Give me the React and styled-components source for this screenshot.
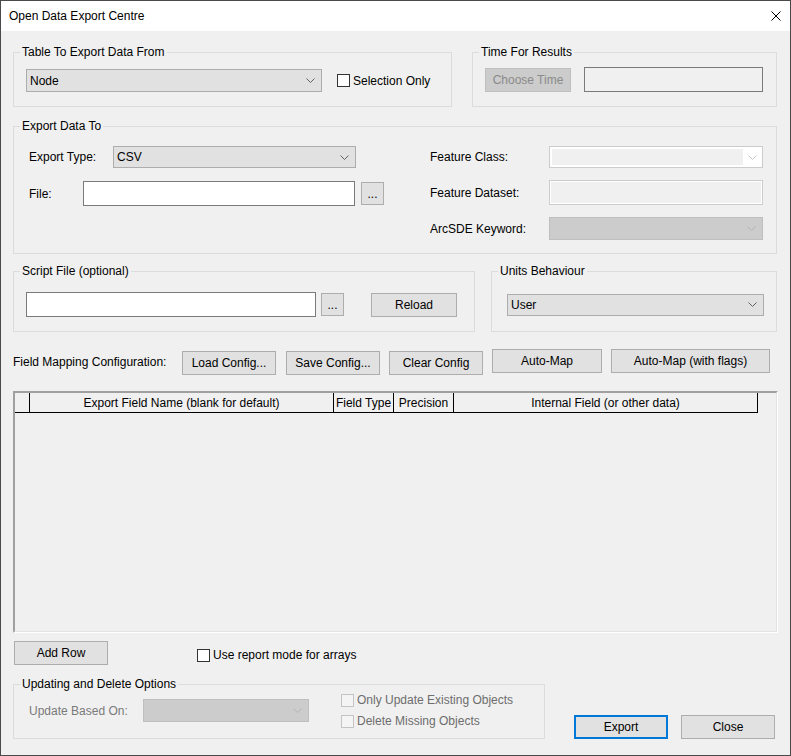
import React from "react";
import styled, {createGlobalStyle} from "styled-components";

const GlobalStyle = createGlobalStyle`
  html, body {
    margin: 0;
    padding: 0;
    background: #ffffff;
  }
  body {
    font-family: "Liberation Sans", Arial, sans-serif;
    font-size: 12px;
    color: #000;
  }
  * {
    box-sizing: border-box;
  }
`;

function Chevron({color = "#606060"}) {
    return (
        <svg width="9" height="5" viewBox="0 0 9 5">
            <path d="M0.5 0.5 L4.5 4.5 L8.5 0.5" fill="none" stroke={color} strokeWidth="1"/>
        </svg>
    );
}

function App() {
    return (
        <>
            <GlobalStyle/>
            <Window>
                <TitleBar>
                    <span>Open Data Export Centre</span>
                    <CloseBox>
                        <svg width="10" height="10" viewBox="0 0 10 10">
                            <path d="M0.5 0.5 L9.5 9.5 M9.5 0.5 L0.5 9.5" stroke="#000" strokeWidth="1"/>
                        </svg>
                    </CloseBox>
                </TitleBar>

                <Body>
                    {/* table + time */}
                    <Row $gap={20}>
                        <Group $w={439}>
                            <Legend>Table To Export Data From</Legend>
                            <GroupBody $pad="10px 0 14px 12px">
                                <Combo $w={296} $h={23}>
                                    <span>Node</span>
                                    <Chevron/>
                                </Combo>
                                <CheckLabel $ml={15}>
                                    <Check/>
                                    Selection Only
                                </CheckLabel>
                            </GroupBody>
                        </Group>
                        <Group $w={305}>
                            <Legend>Time For Results</Legend>
                            <GroupBody $pad="8px 0 14px 12px">
                                <Button disabled $w={86} $h={24}>Choose Time</Button>
                                <TextBox $w={179} $h={25} $ml={13} $readOnly/>
                            </GroupBody>
                        </Group>
                    </Row>

                    {/* export data to */}
                    <Row $mt={12}>
                        <Group $w={764}>
                            <Legend>Export Data To</Legend>
                            <GroupBody $pad="13px 0 13px 15px" $align="flex-start">
                                <Column $w={401}>
                                    <FieldRow $h={22}>
                                        <Label $w={84}>Export Type:</Label>
                                        <Combo $w={243} $h={22}>
                                            <span>CSV</span>
                                            <Chevron/>
                                        </Combo>
                                    </FieldRow>
                                    <FieldRow $h={25} $mt={13}>
                                        <Label $w={54}>File:</Label>
                                        <TextBox $w={272} $h={25}/>
                                        <Button $w={23} $h={23} $ml={6}>...</Button>
                                    </FieldRow>
                                </Column>
                                <Column>
                                    <FieldRow $h={22}>
                                        <Label $w={119}>Feature Class:</Label>
                                        <EditCombo $w={214} $h={22}>
                                            <EditArea/>
                                            <ChevronBox>
                                                <Chevron color="#c8c8c8"/>
                                            </ChevronBox>
                                        </EditCombo>
                                    </FieldRow>
                                    <FieldRow $h={25} $mt={12}>
                                        <Label $w={119}>Feature Dataset:</Label>
                                        <TextBox $w={214} $h={25} $disabled/>
                                    </FieldRow>
                                    <FieldRow $h={23} $mt={12}>
                                        <Label $w={119}>ArcSDE Keyword:</Label>
                                        <Combo $w={214} $h={23} $disabled>
                                            <span/>
                                            <Chevron color="#b4b4b4"/>
                                        </Combo>
                                    </FieldRow>
                                </Column>
                            </GroupBody>
                        </Group>
                    </Row>

                    {/* script file + units */}
                    <Row $mt={10} $gap={16}>
                        <Group $w={462}>
                            <Legend>Script File (optional)</Legend>
                            <GroupBody $pad="14px 0 14px 12px">
                                <TextBox $w={290} $h={25}/>
                                <Button $w={23} $h={23} $ml={5}>...</Button>
                                <Button $w={86} $h={24} $ml={27}>Reload</Button>
                            </GroupBody>
                        </Group>
                        <Group $w={286}>
                            <Legend>Units Behaviour</Legend>
                            <GroupBody $pad="14px 0 14px 15px">
                                <FieldRow $h={25}>
                                    <Combo $w={257} $h={22}>
                                        <span>User</span>
                                        <Chevron/>
                                    </Combo>
                                </FieldRow>
                            </GroupBody>
                        </Group>
                    </Row>

                    {/* field mapping toolbar */}
                    <Toolbar>
                        <Label $w={169}>Field Mapping Configuration:</Label>
                        <Button $w={94} $h={24} $self="flex-end">Load Config...</Button>
                        <Button $w={94} $h={24} $ml={10} $self="flex-end">Save Config...</Button>
                        <Button $w={94} $h={24} $ml={9} $self="flex-end">Clear Config</Button>
                        <Button $w={110} $h={24} $ml={9} $self="flex-start">Auto-Map</Button>
                        <Button $w={159} $h={24} $ml={9} $self="flex-start">Auto-Map (with flags)</Button>
                    </Toolbar>

                    {/* grid */}
                    <Grid>
                        <GridInner>
                            <HeaderRow>
                                <HeaderCell/>
                                <HeaderCell>Export Field Name (blank for default)</HeaderCell>
                                <HeaderCell>Field Type</HeaderCell>
                                <HeaderCell>Precision</HeaderCell>
                                <HeaderCell>Internal Field (or other data)</HeaderCell>
                            </HeaderRow>
                        </GridInner>
                    </Grid>

                    <Row $mt={8} $align="flex-start">
                        <Button $w={94} $h={24} $ml={1}>Add Row</Button>
                        <CheckLabel $ml={89} $mt={7}>
                            <Check/>
                            Use report mode for arrays
                        </CheckLabel>
                    </Row>

                    <Row $mt={12} $align="flex-end">
                        <Group $w={532}>
                            <Legend>Updating and Delete Options</Legend>
                            <GroupBody $pad="2px 0 10px 15px">
                                <Label $w={114} $disabled>Update Based On:</Label>
                                <Combo $w={166} $h={23} $disabled>
                                    <span/>
                                    <Chevron color="#b4b4b4"/>
                                </Combo>
                                <CheckColumn>
                                    <CheckLabel $disabled>
                                        <Check $disabled/>
                                        Only Update Existing Objects
                                    </CheckLabel>
                                    <CheckLabel $disabled>
                                        <Check $disabled/>
                                        Delete Missing Objects
                                    </CheckLabel>
                                </CheckColumn>
                            </GroupBody>
                        </Group>
                        <Button $w={94} $h={24} $ml={29} $default>Export</Button>
                        <Button $w={94} $h={24} $ml={13}>Close</Button>
                    </Row>
                </Body>
            </Window>
        </>
    );
}

const Window = styled.div`
  width: 791px;
  height: 756px;
  border: 1px solid #4a4a4a;
  background: #f0f0f0;
  display: flex;
  flex-direction: column;
  overflow: hidden;
`;

const TitleBar = styled.div`
  height: 30px;
  flex-shrink: 0;
  background: #ffffff;
  display: flex;
  align-items: center;
  justify-content: space-between;
  padding-left: 8px;
`;

const CloseBox = styled.div`
  width: 28px;
  height: 30px;
  display: flex;
  align-items: center;
  justify-content: center;
`;

const Body = styled.div`
  display: flex;
  flex-direction: column;
  padding: 14px 13px 0 12px;
`;

const Row = styled.div`
  display: flex;
  align-items: ${p => p.$align || "stretch"};
  gap: ${p => p.$gap || 0}px;
  margin-top: ${p => p.$mt || 0}px;
`;

const Group = styled.fieldset`
  margin: 0;
  padding: 0;
  min-width: 0;
  width: ${p => p.$w}px;
  border: 1px solid #dcdcdc;
`;

const Legend = styled.legend`
  margin-left: 6px;
  padding: 0 2px;
  font-size: 12px;
  line-height: 14px;
`;

const GroupBody = styled.div`
  display: flex;
  align-items: ${p => p.$align || "center"};
  padding: ${p => p.$pad};
`;

const Column = styled.div`
  display: flex;
  flex-direction: column;
  width: ${p => (p.$w ? `${p.$w}px` : "auto")};
`;

const FieldRow = styled.div`
  display: flex;
  align-items: center;
  height: ${p => p.$h}px;
  margin-top: ${p => p.$mt || 0}px;
`;

const Label = styled.span`
  width: ${p => p.$w}px;
  flex-shrink: 0;
  white-space: nowrap;
  color: ${p => (p.$disabled ? "#7a7a7a" : "#000")};
`;

const Combo = styled.div`
  width: ${p => p.$w}px;
  height: ${p => p.$h}px;
  flex-shrink: 0;
  display: flex;
  align-items: center;
  justify-content: space-between;
  padding: 0 6px 0 3px;
  background: ${p => (p.$disabled ? "#cccccc" : "#e1e1e1")};
  border: 1px solid ${p => (p.$disabled ? "#bfbfbf" : "#adadad")};
`;

const EditCombo = styled.div`
  width: ${p => p.$w}px;
  height: ${p => p.$h}px;
  display: flex;
  align-items: stretch;
  padding: 1px 0 1px 1px;
  background: #ffffff;
  border: 1px solid #cccccc;
`;

const EditArea = styled.div`
  flex: 1;
  background: #f0f0f0;
  margin: 1px 0 1px 1px;
`;

const ChevronBox = styled.div`
  width: 19px;
  display: flex;
  align-items: center;
  justify-content: center;
`;

const TextBox = styled.div`
  width: ${p => p.$w}px;
  height: ${p => p.$h}px;
  flex-shrink: 0;
  margin-left: ${p => p.$ml || 0}px;
  background: ${p => (p.$readOnly || p.$disabled ? "#f0f0f0" : "#ffffff")};
  border: 1px solid ${p => (p.$disabled ? "#cccccc" : "#7a7a7a")};
  box-shadow: ${p => (p.$disabled ? "inset 1px 1px 0 #ffffff, inset -1px -1px 0 #ffffff" : "none")};
`;

const Button = styled.button`
  width: ${p => p.$w}px;
  height: ${p => p.$h}px;
  flex-shrink: 0;
  margin: 0 0 0 ${p => p.$ml || 0}px;
  padding: 0;
  align-self: ${p => p.$self || "auto"};
  font-family: inherit;
  font-size: 12px;
  color: #000;
  background: #e1e1e1;
  border: ${p => (p.$default ? "2px solid #0078d7" : "1px solid #adadad")};

  &:disabled {
    background: #cccccc;
    border-color: #bfbfbf;
    color: #8a8a8a;
  }
`;

const CheckLabel = styled.label`
  display: flex;
  align-items: center;
  gap: 3px;
  line-height: 14px;
  white-space: nowrap;
  margin-left: ${p => p.$ml || 0}px;
  margin-top: ${p => p.$mt || 0}px;
  color: ${p => (p.$disabled ? "#6d6d6d" : "#000")};
`;

const Check = styled.span`
  width: 13px;
  height: 13px;
  flex-shrink: 0;
  border: 1px solid ${p => (p.$disabled ? "#c4c4c4" : "#333333")};
  background: ${p => (p.$disabled ? "#f4f4f4" : "#ffffff")};
`;

const CheckColumn = styled.div`
  height: 35px;
  margin-left: 32px;
  display: flex;
  flex-direction: column;
  justify-content: space-between;
`;

const Toolbar = styled.div`
  display: flex;
  align-items: center;
  height: 26px;
  margin-top: 17px;
`;

const Grid = styled.div`
  width: 765px;
  height: 242px;
  margin-top: 16px;
  border: 1px solid;
  border-color: #a0a0a0 #ffffff #ffffff #a0a0a0;
`;

const GridInner = styled.div`
  height: 100%;
  border: 1px solid;
  border-color: #a0a0a0 #e3e3e3 #e3e3e3 #a0a0a0;
  background: #f0f0f0;
`;

const HeaderRow = styled.div`
  display: grid;
  grid-template-columns: 15px 304px 60px 60px 304px;
  height: 20px;
`;

const HeaderCell = styled.div`
  display: flex;
  align-items: center;
  justify-content: center;
  white-space: nowrap;
  border-right: 1px solid #000;
  border-bottom: 1px solid #000;
  background: #f0f0f0;
`;

export default App;
